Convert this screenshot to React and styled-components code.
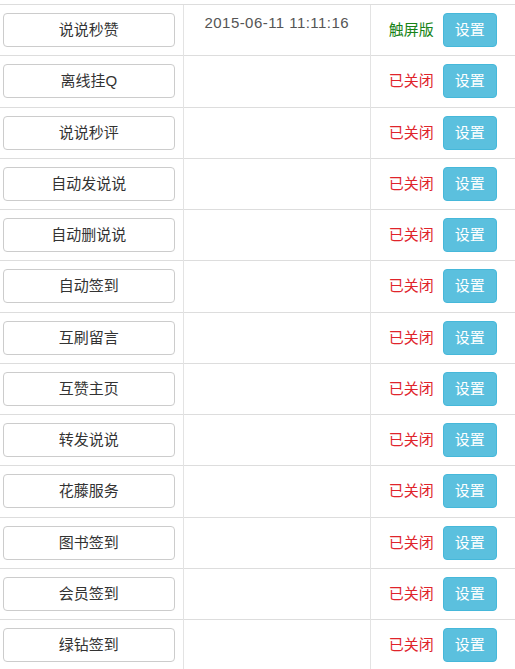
import React from "react";
import styled, { createGlobalStyle } from "styled-components";

const Global = createGlobalStyle`
  html, body {
    margin: 0;
    padding: 0;
    overflow: hidden;
    background: #fff;
  }
  body {
    font-family: "Liberation Sans", "Noto Sans CJK SC", sans-serif;
    color: #333;
  }
`;

const Table = styled.table`
  width: 515px;
  margin-top: 4px;
  border-collapse: collapse;
  table-layout: fixed;
`;

const Row = styled.tr``;

const Cell = styled.td`
  border-top: 1px solid #ddd;
  border-left: ${(p) => (p.$first ? "none" : "1px solid #e3e3e3")};
  padding: ${(p) => (p.$first ? "8px 8px 8.25px 3px" : "8px 8px 8.25px")};
  vertical-align: ${(p) => p.$align || "middle"};
  text-align: ${(p) => (p.$center ? "center" : "left")};
  white-space: nowrap;
`;

const NameButton = styled.button`
  display: block;
  width: 100%;
  height: 34px;
  padding: 6px 12px;
  font-family: "Liberation Sans", "Noto Sans CJK SC", sans-serif;
  font-size: 15px;
  line-height: 20px;
  color: #333;
  background: #fff;
  border: 1px solid #ccc;
  border-radius: 4px;
`;

const DateText = styled.div`
  font-size: 15px;
  line-height: 20px;
  letter-spacing: 0.45px;
  color: #555;
  padding-left: 13px;
`;

const Status = styled.span`
  display: inline-block;
  vertical-align: middle;
  font-size: 15px;
  line-height: 20px;
  margin-right: 9px;
  color: ${(p) => (p.$on ? "#178317" : "#e0242b")};
`;

const SetButton = styled.button`
  display: inline-block;
  vertical-align: middle;
  height: 34px;
  padding: 6px 11px;
  font-family: "Liberation Sans", "Noto Sans CJK SC", sans-serif;
  font-size: 15px;
  line-height: 20px;
  color: #fff;
  background: #5bc0de;
  border: 1px solid #46b8da;
  border-radius: 4px;
`;

const items = [
  { name: "说说秒赞", date: "2015-06-11 11:11:16", status: "触屏版", on: true },
  { name: "离线挂Q" },
  { name: "说说秒评" },
  { name: "自动发说说" },
  { name: "自动删说说" },
  { name: "自动签到" },
  { name: "互刷留言" },
  { name: "互赞主页" },
  { name: "转发说说" },
  { name: "花藤服务" },
  { name: "图书签到" },
  { name: "会员签到" },
  { name: "绿钻签到" },
];

export default function App() {
  return (
    <>
      <Global />
      <Table>
        <colgroup>
          <col style={{ width: 183 }} />
          <col style={{ width: 187 }} />
          <col style={{ width: 145 }} />
        </colgroup>
        <tbody>
          {items.map((it) => (
            <Row key={it.name}>
              <Cell $first>
                <NameButton>{it.name}</NameButton>
              </Cell>
              <Cell $align="top">
                <DateText>{it.date || ""}</DateText>
              </Cell>
              <Cell $center>
                <Status $on={it.on}>{it.status || "已关闭"}</Status>
                <SetButton>设置</SetButton>
              </Cell>
            </Row>
          ))}
        </tbody>
      </Table>
    </>
  );
}
